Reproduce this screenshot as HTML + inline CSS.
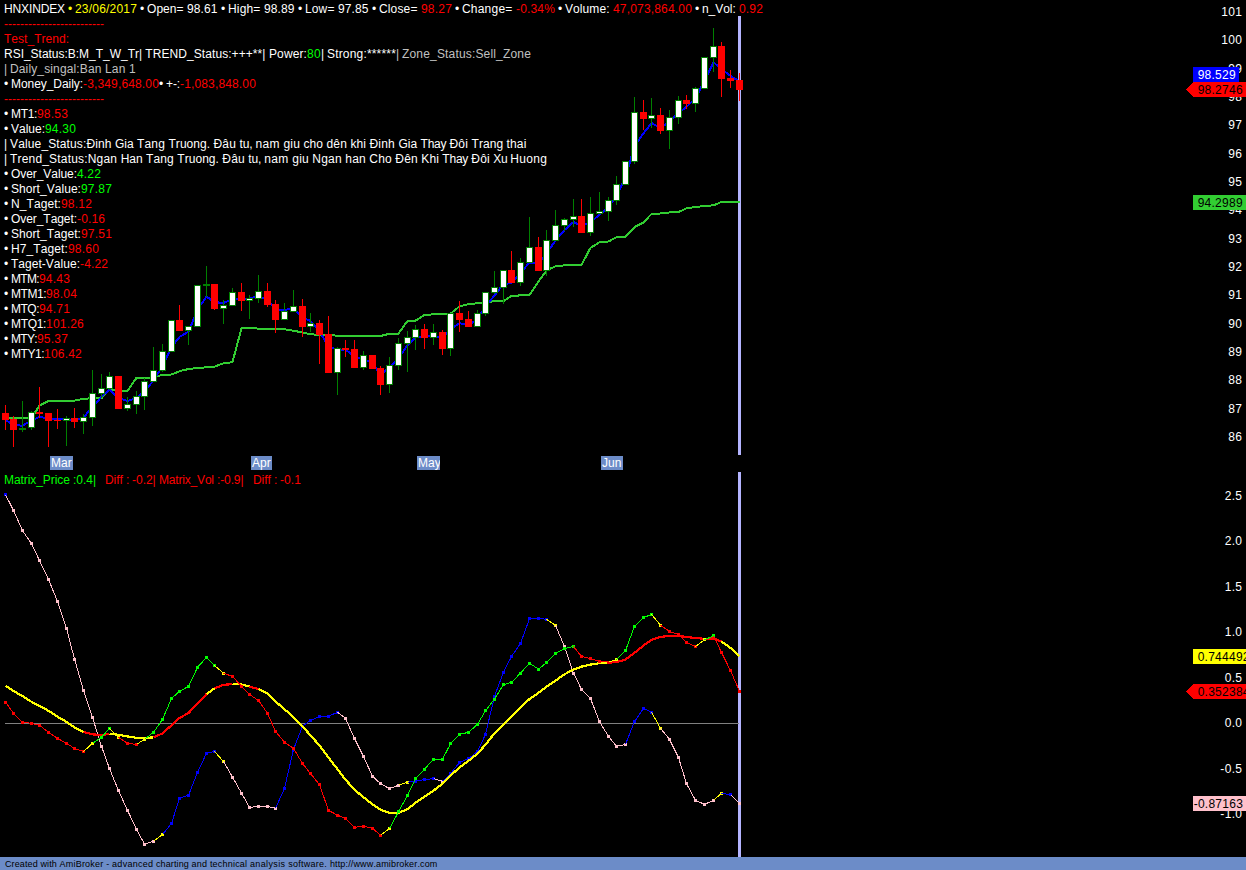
<!DOCTYPE html>
<html><head><meta charset="utf-8"><title>HNXINDEX</title>
<style>
html,body{margin:0;padding:0;background:#000;}
body{width:1246px;height:870px;overflow:hidden;position:relative;font-family:"Liberation Sans",Arial,sans-serif;font-size:12px;line-height:15px;color:#fff;}
.t{position:absolute;white-space:pre;height:15px;font-kerning:none}
.t span{position:absolute;top:0}
.r{color:#ff0000}.g{color:#00ff00}.y{color:#ffff00}.s{color:#c0c0c0}.w{color:#fff}
.ax{position:absolute;right:3.7px;letter-spacing:.33px;font-kerning:none;white-space:pre;height:15px;text-align:right;color:#fff}
.lb{position:absolute;letter-spacing:.25px;font-kerning:none;white-space:pre;height:15px;color:#000}
.m{position:absolute;top:456px;height:14px;line-height:14px;background:#6c8cc8;color:#fff;padding:0 0 0 1px;white-space:pre;font-kerning:none;overflow:hidden}
#sb{position:absolute;left:0;top:857px;width:1246px;height:13px;background:#6c8cc8;color:#000;font-size:9px;line-height:13px;white-space:pre}
#sb span{position:absolute;top:1px;font-kerning:none}
</style></head><body>

<svg width="1246" height="870" viewBox="0 0 1246 870" shape-rendering="crispEdges" style="position:absolute;left:0;top:0">
<rect x="738" y="16" width="3" height="439" fill="#b4b4ff"/>
<rect x="738" y="472" width="3" height="385" fill="#b4b4ff"/>
<polyline points="5.5,418.3 13.5,418.3 22.5,418.3 31.5,418.0 39.5,405.6 48.5,401.0 57.5,400.7 66.5,400.7 74.5,400.7 83.5,398.6 92.5,398.4 101.5,398.2 109.5,389.0 118.5,391.0 127.5,391.0 136.5,377.8 144.5,377.8 153.5,377.5 162.5,374.7 171.5,374.5 179.5,371.2 188.5,369.0 197.5,368.0 206.5,367.3 214.5,366.7 223.5,363.3 232.5,362.2 241.5,328.2 249.5,327.9 258.5,328.6 267.5,329.2 275.5,329.2 284.5,329.2 293.5,330.7 302.5,332.5 310.5,334.4 319.5,334.7 328.5,334.8 337.5,335.8 345.5,335.8 354.5,335.8 363.5,335.8 372.5,335.8 380.5,336.0 389.5,333.8 398.5,333.6 407.5,321.0 415.5,320.6 424.5,315.0 433.5,314.3 442.5,314.0 450.5,313.6 459.5,306.4 468.5,304.2 477.5,303.2 485.5,302.4 494.5,301.2 503.5,301.2 511.5,295.9 520.5,295.4 529.5,295.1 538.5,281.4 546.5,270.5 555.5,266.2 564.5,265.4 573.5,265.2 581.5,264.9 590.5,247.8 599.5,242.3 608.5,241.5 616.5,237.2 625.5,236.9 634.5,227.1 643.5,222.5 651.5,213.9 660.5,213.5 669.5,212.5 678.5,212.1 686.5,208.2 695.5,207.0 704.5,206.0 713.5,205.3 721.5,202.0 730.5,201.7 739.5,201.7" fill="none" stroke="#32cd32" stroke-width="2" stroke-linejoin="round"/>
<polyline points="5.5,419.8 13.5,425.3 22.5,425.6 31.5,420.5 39.5,416.9 48.5,418.6 57.5,419.0 66.5,419.4 74.5,419.8 83.5,417.6 92.5,406.8 101.5,396.9 109.5,389.4 118.5,398.0 127.5,401.0 136.5,398.0 144.5,390.8 153.5,380.7 162.5,366.0 171.5,347.3 179.5,336.9 188.5,331.8 197.5,309.4 206.5,296.6 214.5,302.1 223.5,303.0 232.5,299.0 241.5,299.2 249.5,298.5 258.5,296.0 267.5,300.0 275.5,309.5 284.5,309.8 293.5,308.7 302.5,317.3 310.5,321.0 319.5,331.1 328.5,347.0 337.5,349.6 345.5,349.5 354.5,356.8 363.5,358.9 372.5,363.3 380.5,374.5 389.5,367.5 398.5,358.2 407.5,345.2 415.5,337.2 424.5,336.9 433.5,335.8 442.5,337.9 450.5,329.0 459.5,323.2 468.5,325.3 477.5,319.1 485.5,306.0 494.5,295.6 503.5,284.0 511.5,283.1 520.5,272.7 529.5,262.5 538.5,263.0 546.5,253.5 555.5,240.5 564.5,230.0 573.5,222.0 581.5,226.3 590.5,222.0 599.5,214.8 608.5,207.5 616.5,195.9 625.5,177.5 634.5,146.2 643.5,133.3 651.5,123.1 660.5,127.9 669.5,121.4 678.5,112.7 686.5,106.9 695.5,98.2 704.5,80.8 713.5,62.3 721.5,69.2 730.5,75.8 739.5,81.5" fill="none" stroke="#0000ff" stroke-width="2" stroke-linejoin="round"/>
<rect x="5" y="405" width="1" height="25" fill="#ff0000"/>
<rect x="2" y="413" width="7" height="7" fill="#ff0000"/>
<rect x="13" y="416" width="1" height="31" fill="#ff0000"/>
<rect x="10" y="419" width="7" height="11" fill="#ff0000"/>
<rect x="22" y="401" width="1" height="31" fill="#008000"/>
<rect x="19" y="428" width="7" height="2" fill="#008000"/>
<rect x="31" y="411" width="1" height="19" fill="#008000"/>
<rect x="28" y="412" width="7" height="16" fill="#008000"/>
<rect x="29" y="413" width="5" height="14" fill="#ffffff"/>
<rect x="39" y="387" width="1" height="31" fill="#ff0000"/>
<rect x="36" y="412" width="7" height="2" fill="#ff0000"/>
<rect x="48" y="413" width="1" height="34" fill="#ff0000"/>
<rect x="45" y="413" width="7" height="8" fill="#ff0000"/>
<rect x="57" y="409" width="1" height="20" fill="#ff0000"/>
<rect x="54" y="420" width="7" height="1" fill="#ff0000"/>
<rect x="66" y="416" width="1" height="30" fill="#008000"/>
<rect x="63" y="418" width="7" height="3" fill="#008000"/>
<rect x="64" y="419" width="5" height="1" fill="#ffffff"/>
<rect x="74" y="408" width="1" height="20" fill="#ff0000"/>
<rect x="71" y="418" width="7" height="4" fill="#ff0000"/>
<rect x="83" y="414" width="1" height="20" fill="#008000"/>
<rect x="80" y="417" width="7" height="5" fill="#008000"/>
<rect x="81" y="418" width="5" height="3" fill="#ffffff"/>
<rect x="92" y="370" width="1" height="56" fill="#008000"/>
<rect x="89" y="393" width="7" height="25" fill="#008000"/>
<rect x="90" y="394" width="5" height="23" fill="#ffffff"/>
<rect x="101" y="374" width="1" height="24" fill="#008000"/>
<rect x="98" y="388" width="7" height="6" fill="#008000"/>
<rect x="99" y="389" width="5" height="4" fill="#ffffff"/>
<rect x="109" y="372" width="1" height="18" fill="#008000"/>
<rect x="106" y="376" width="7" height="13" fill="#008000"/>
<rect x="107" y="377" width="5" height="11" fill="#ffffff"/>
<rect x="118" y="376" width="1" height="33" fill="#ff0000"/>
<rect x="115" y="376" width="7" height="33" fill="#ff0000"/>
<rect x="127" y="397" width="1" height="14" fill="#008000"/>
<rect x="124" y="404" width="7" height="5" fill="#008000"/>
<rect x="125" y="405" width="5" height="3" fill="#ffffff"/>
<rect x="136" y="391" width="1" height="23" fill="#008000"/>
<rect x="133" y="396" width="7" height="9" fill="#008000"/>
<rect x="134" y="397" width="5" height="7" fill="#ffffff"/>
<rect x="144" y="378" width="1" height="32" fill="#008000"/>
<rect x="141" y="381" width="7" height="16" fill="#008000"/>
<rect x="142" y="382" width="5" height="14" fill="#ffffff"/>
<rect x="153" y="347" width="1" height="35" fill="#008000"/>
<rect x="150" y="370" width="7" height="12" fill="#008000"/>
<rect x="151" y="371" width="5" height="10" fill="#ffffff"/>
<rect x="162" y="344" width="1" height="28" fill="#008000"/>
<rect x="159" y="351" width="7" height="20" fill="#008000"/>
<rect x="160" y="352" width="5" height="18" fill="#ffffff"/>
<rect x="171" y="320" width="1" height="32" fill="#008000"/>
<rect x="168" y="320" width="7" height="32" fill="#008000"/>
<rect x="169" y="321" width="5" height="30" fill="#ffffff"/>
<rect x="179" y="305" width="1" height="26" fill="#ff0000"/>
<rect x="176" y="320" width="7" height="11" fill="#ff0000"/>
<rect x="188" y="326" width="1" height="19" fill="#008000"/>
<rect x="185" y="326" width="7" height="5" fill="#008000"/>
<rect x="186" y="327" width="5" height="3" fill="#ffffff"/>
<rect x="197" y="285" width="1" height="42" fill="#008000"/>
<rect x="194" y="285" width="7" height="42" fill="#008000"/>
<rect x="195" y="286" width="5" height="40" fill="#ffffff"/>
<rect x="206" y="266" width="1" height="31" fill="#008000"/>
<rect x="203" y="284" width="7" height="2" fill="#008000"/>
<rect x="214" y="284" width="1" height="26" fill="#ff0000"/>
<rect x="211" y="284" width="7" height="25" fill="#ff0000"/>
<rect x="223" y="300" width="1" height="24" fill="#008000"/>
<rect x="220" y="305" width="7" height="4" fill="#008000"/>
<rect x="221" y="306" width="5" height="2" fill="#ffffff"/>
<rect x="232" y="288" width="1" height="18" fill="#008000"/>
<rect x="229" y="292" width="7" height="14" fill="#008000"/>
<rect x="230" y="293" width="5" height="12" fill="#ffffff"/>
<rect x="241" y="283" width="1" height="28" fill="#ff0000"/>
<rect x="238" y="292" width="7" height="9" fill="#ff0000"/>
<rect x="249" y="295" width="1" height="24" fill="#008000"/>
<rect x="246" y="298" width="7" height="3" fill="#008000"/>
<rect x="247" y="299" width="5" height="1" fill="#ffffff"/>
<rect x="258" y="275" width="1" height="28" fill="#008000"/>
<rect x="255" y="291" width="7" height="8" fill="#008000"/>
<rect x="256" y="292" width="5" height="6" fill="#ffffff"/>
<rect x="267" y="283" width="1" height="24" fill="#ff0000"/>
<rect x="264" y="291" width="7" height="14" fill="#ff0000"/>
<rect x="275" y="300" width="1" height="33" fill="#ff0000"/>
<rect x="272" y="304" width="7" height="16" fill="#ff0000"/>
<rect x="284" y="303" width="1" height="17" fill="#008000"/>
<rect x="281" y="311" width="7" height="9" fill="#008000"/>
<rect x="282" y="312" width="5" height="7" fill="#ffffff"/>
<rect x="293" y="290" width="1" height="22" fill="#008000"/>
<rect x="290" y="306" width="7" height="6" fill="#008000"/>
<rect x="291" y="307" width="5" height="4" fill="#ffffff"/>
<rect x="302" y="299" width="1" height="38" fill="#ff0000"/>
<rect x="299" y="306" width="7" height="21" fill="#ff0000"/>
<rect x="310" y="313" width="1" height="19" fill="#008000"/>
<rect x="307" y="323" width="7" height="4" fill="#008000"/>
<rect x="308" y="324" width="5" height="2" fill="#ffffff"/>
<rect x="319" y="320" width="1" height="44" fill="#ff0000"/>
<rect x="316" y="323" width="7" height="12" fill="#ff0000"/>
<rect x="328" y="316" width="1" height="57" fill="#ff0000"/>
<rect x="325" y="334" width="7" height="39" fill="#ff0000"/>
<rect x="337" y="347" width="1" height="48" fill="#008000"/>
<rect x="334" y="348" width="7" height="25" fill="#008000"/>
<rect x="335" y="349" width="5" height="23" fill="#ffffff"/>
<rect x="345" y="340" width="1" height="17" fill="#ff0000"/>
<rect x="342" y="348" width="7" height="2" fill="#ff0000"/>
<rect x="354" y="340" width="1" height="28" fill="#ff0000"/>
<rect x="351" y="349" width="7" height="19" fill="#ff0000"/>
<rect x="363" y="351" width="1" height="19" fill="#008000"/>
<rect x="360" y="355" width="7" height="13" fill="#008000"/>
<rect x="361" y="356" width="5" height="11" fill="#ffffff"/>
<rect x="372" y="355" width="1" height="14" fill="#ff0000"/>
<rect x="369" y="355" width="7" height="14" fill="#ff0000"/>
<rect x="380" y="366" width="1" height="29" fill="#ff0000"/>
<rect x="377" y="368" width="7" height="17" fill="#ff0000"/>
<rect x="389" y="357" width="1" height="36" fill="#008000"/>
<rect x="386" y="365" width="7" height="20" fill="#008000"/>
<rect x="387" y="366" width="5" height="18" fill="#ffffff"/>
<rect x="398" y="338" width="1" height="32" fill="#008000"/>
<rect x="395" y="343" width="7" height="23" fill="#008000"/>
<rect x="396" y="344" width="5" height="21" fill="#ffffff"/>
<rect x="407" y="331" width="1" height="41" fill="#008000"/>
<rect x="404" y="337" width="7" height="7" fill="#008000"/>
<rect x="405" y="338" width="5" height="5" fill="#ffffff"/>
<rect x="415" y="325" width="1" height="25" fill="#008000"/>
<rect x="412" y="329" width="7" height="9" fill="#008000"/>
<rect x="413" y="330" width="5" height="7" fill="#ffffff"/>
<rect x="424" y="324" width="1" height="25" fill="#ff0000"/>
<rect x="421" y="329" width="7" height="9" fill="#ff0000"/>
<rect x="433" y="324" width="1" height="21" fill="#008000"/>
<rect x="430" y="332" width="7" height="6" fill="#008000"/>
<rect x="431" y="333" width="5" height="4" fill="#ffffff"/>
<rect x="442" y="330" width="1" height="25" fill="#ff0000"/>
<rect x="439" y="332" width="7" height="17" fill="#ff0000"/>
<rect x="450" y="313" width="1" height="43" fill="#008000"/>
<rect x="447" y="313" width="7" height="36" fill="#008000"/>
<rect x="448" y="314" width="5" height="34" fill="#ffffff"/>
<rect x="459" y="301" width="1" height="31" fill="#ff0000"/>
<rect x="456" y="313" width="7" height="7" fill="#ff0000"/>
<rect x="468" y="311" width="1" height="16" fill="#ff0000"/>
<rect x="465" y="319" width="7" height="8" fill="#ff0000"/>
<rect x="477" y="310" width="1" height="17" fill="#008000"/>
<rect x="474" y="313" width="7" height="14" fill="#008000"/>
<rect x="475" y="314" width="5" height="12" fill="#ffffff"/>
<rect x="485" y="292" width="1" height="24" fill="#008000"/>
<rect x="482" y="292" width="7" height="22" fill="#008000"/>
<rect x="483" y="293" width="5" height="20" fill="#ffffff"/>
<rect x="494" y="271" width="1" height="23" fill="#008000"/>
<rect x="491" y="287" width="7" height="6" fill="#008000"/>
<rect x="492" y="288" width="5" height="4" fill="#ffffff"/>
<rect x="503" y="270" width="1" height="34" fill="#008000"/>
<rect x="500" y="270" width="7" height="18" fill="#008000"/>
<rect x="501" y="271" width="5" height="16" fill="#ffffff"/>
<rect x="511" y="251" width="1" height="32" fill="#ff0000"/>
<rect x="508" y="270" width="7" height="13" fill="#ff0000"/>
<rect x="520" y="258" width="1" height="28" fill="#008000"/>
<rect x="517" y="262" width="7" height="21" fill="#008000"/>
<rect x="518" y="263" width="5" height="19" fill="#ffffff"/>
<rect x="529" y="217" width="1" height="46" fill="#008000"/>
<rect x="526" y="247" width="7" height="16" fill="#008000"/>
<rect x="527" y="248" width="5" height="14" fill="#ffffff"/>
<rect x="538" y="237" width="1" height="34" fill="#ff0000"/>
<rect x="535" y="247" width="7" height="24" fill="#ff0000"/>
<rect x="546" y="230" width="1" height="46" fill="#008000"/>
<rect x="543" y="240" width="7" height="31" fill="#008000"/>
<rect x="544" y="241" width="5" height="29" fill="#ffffff"/>
<rect x="555" y="210" width="1" height="31" fill="#008000"/>
<rect x="552" y="225" width="7" height="16" fill="#008000"/>
<rect x="553" y="226" width="5" height="14" fill="#ffffff"/>
<rect x="564" y="218" width="1" height="13" fill="#008000"/>
<rect x="561" y="219" width="7" height="7" fill="#008000"/>
<rect x="562" y="220" width="5" height="5" fill="#ffffff"/>
<rect x="573" y="199" width="1" height="28" fill="#008000"/>
<rect x="570" y="216" width="7" height="4" fill="#008000"/>
<rect x="571" y="217" width="5" height="2" fill="#ffffff"/>
<rect x="581" y="199" width="1" height="34" fill="#ff0000"/>
<rect x="578" y="216" width="7" height="17" fill="#ff0000"/>
<rect x="590" y="197" width="1" height="39" fill="#008000"/>
<rect x="587" y="213" width="7" height="20" fill="#008000"/>
<rect x="588" y="214" width="5" height="18" fill="#ffffff"/>
<rect x="599" y="192" width="1" height="22" fill="#008000"/>
<rect x="596" y="211" width="7" height="3" fill="#008000"/>
<rect x="597" y="212" width="5" height="1" fill="#ffffff"/>
<rect x="608" y="197" width="1" height="24" fill="#008000"/>
<rect x="605" y="200" width="7" height="12" fill="#008000"/>
<rect x="606" y="201" width="5" height="10" fill="#ffffff"/>
<rect x="616" y="176" width="1" height="29" fill="#008000"/>
<rect x="613" y="184" width="7" height="17" fill="#008000"/>
<rect x="614" y="185" width="5" height="15" fill="#ffffff"/>
<rect x="625" y="161" width="1" height="24" fill="#008000"/>
<rect x="622" y="161" width="7" height="24" fill="#008000"/>
<rect x="623" y="162" width="5" height="22" fill="#ffffff"/>
<rect x="634" y="97" width="1" height="67" fill="#008000"/>
<rect x="631" y="112" width="7" height="50" fill="#008000"/>
<rect x="632" y="113" width="5" height="48" fill="#ffffff"/>
<rect x="643" y="100" width="1" height="30" fill="#ff0000"/>
<rect x="640" y="112" width="7" height="7" fill="#ff0000"/>
<rect x="651" y="98" width="1" height="30" fill="#008000"/>
<rect x="648" y="115" width="7" height="4" fill="#008000"/>
<rect x="649" y="116" width="5" height="2" fill="#ffffff"/>
<rect x="660" y="108" width="1" height="26" fill="#ff0000"/>
<rect x="657" y="115" width="7" height="16" fill="#ff0000"/>
<rect x="669" y="110" width="1" height="39" fill="#008000"/>
<rect x="666" y="117" width="7" height="14" fill="#008000"/>
<rect x="667" y="118" width="5" height="12" fill="#ffffff"/>
<rect x="678" y="96" width="1" height="28" fill="#008000"/>
<rect x="675" y="100" width="7" height="18" fill="#008000"/>
<rect x="676" y="101" width="5" height="16" fill="#ffffff"/>
<rect x="686" y="95" width="1" height="14" fill="#ff0000"/>
<rect x="683" y="100" width="7" height="4" fill="#ff0000"/>
<rect x="695" y="87" width="1" height="25" fill="#008000"/>
<rect x="692" y="88" width="7" height="16" fill="#008000"/>
<rect x="693" y="89" width="5" height="14" fill="#ffffff"/>
<rect x="704" y="57" width="1" height="32" fill="#008000"/>
<rect x="701" y="57" width="7" height="32" fill="#008000"/>
<rect x="702" y="58" width="5" height="30" fill="#ffffff"/>
<rect x="713" y="28" width="1" height="44" fill="#008000"/>
<rect x="710" y="46" width="7" height="12" fill="#008000"/>
<rect x="711" y="47" width="5" height="10" fill="#ffffff"/>
<rect x="721" y="42" width="1" height="55" fill="#ff0000"/>
<rect x="718" y="46" width="7" height="33" fill="#ff0000"/>
<rect x="730" y="70" width="1" height="18" fill="#ff0000"/>
<rect x="727" y="78" width="7" height="3" fill="#ff0000"/>
<rect x="739" y="73" width="1" height="28" fill="#ff0000"/>
<rect x="736" y="80" width="7" height="10" fill="#ff0000"/>
<rect x="5" y="723" width="734" height="1" fill="#808080"/>
<rect x="4" y="493" width="3" height="3" fill="#0000ff"/>
<rect x="12" y="509" width="3" height="3" fill="#ffc0cb"/>
<rect x="21" y="529" width="3" height="3" fill="#ffc0cb"/>
<rect x="30" y="542" width="3" height="3" fill="#ffc0cb"/>
<rect x="38" y="559" width="3" height="3" fill="#ffc0cb"/>
<rect x="47" y="578" width="3" height="3" fill="#ffc0cb"/>
<rect x="56" y="600" width="3" height="3" fill="#ffc0cb"/>
<rect x="65" y="627" width="3" height="3" fill="#ffc0cb"/>
<rect x="73" y="658" width="3" height="3" fill="#ffc0cb"/>
<rect x="82" y="689" width="3" height="3" fill="#ffc0cb"/>
<rect x="91" y="716" width="3" height="3" fill="#ffc0cb"/>
<rect x="100" y="745" width="3" height="3" fill="#ffc0cb"/>
<rect x="108" y="767" width="3" height="3" fill="#ffc0cb"/>
<rect x="117" y="789" width="3" height="3" fill="#ffc0cb"/>
<rect x="126" y="809" width="3" height="3" fill="#ffc0cb"/>
<rect x="135" y="828" width="3" height="3" fill="#ffc0cb"/>
<rect x="143" y="843" width="3" height="3" fill="#ffc0cb"/>
<rect x="152" y="840" width="3" height="3" fill="#ffc0cb"/>
<rect x="161" y="833" width="3" height="3" fill="#ffff00"/>
<rect x="170" y="822" width="3" height="3" fill="#0000ff"/>
<rect x="178" y="797" width="3" height="3" fill="#0000ff"/>
<rect x="187" y="794" width="3" height="3" fill="#0000ff"/>
<rect x="196" y="771" width="3" height="3" fill="#0000ff"/>
<rect x="205" y="752" width="3" height="3" fill="#0000ff"/>
<rect x="213" y="750" width="3" height="3" fill="#0000ff"/>
<rect x="222" y="760" width="3" height="3" fill="#ffff00"/>
<rect x="231" y="776" width="3" height="3" fill="#ffc0cb"/>
<rect x="240" y="792" width="3" height="3" fill="#ffc0cb"/>
<rect x="248" y="806" width="3" height="3" fill="#ffc0cb"/>
<rect x="257" y="805" width="3" height="3" fill="#ffc0cb"/>
<rect x="266" y="805" width="3" height="3" fill="#ffc0cb"/>
<rect x="274" y="807" width="3" height="3" fill="#ffc0cb"/>
<rect x="283" y="787" width="3" height="3" fill="#0000ff"/>
<rect x="292" y="748" width="3" height="3" fill="#0000ff"/>
<rect x="301" y="725" width="3" height="3" fill="#0000ff"/>
<rect x="309" y="719" width="3" height="3" fill="#0000ff"/>
<rect x="318" y="715" width="3" height="3" fill="#0000ff"/>
<rect x="327" y="715" width="3" height="3" fill="#0000ff"/>
<rect x="336" y="711" width="3" height="3" fill="#0000ff"/>
<rect x="344" y="717" width="3" height="3" fill="#ffc0cb"/>
<rect x="353" y="737" width="3" height="3" fill="#ffc0cb"/>
<rect x="362" y="755" width="3" height="3" fill="#ffc0cb"/>
<rect x="371" y="775" width="3" height="3" fill="#ffc0cb"/>
<rect x="379" y="782" width="3" height="3" fill="#ffc0cb"/>
<rect x="388" y="787" width="3" height="3" fill="#ffc0cb"/>
<rect x="397" y="784" width="3" height="3" fill="#ffc0cb"/>
<rect x="406" y="781" width="3" height="3" fill="#ffff00"/>
<rect x="414" y="780" width="3" height="3" fill="#0000ff"/>
<rect x="423" y="778" width="3" height="3" fill="#0000ff"/>
<rect x="432" y="777" width="3" height="3" fill="#0000ff"/>
<rect x="441" y="780" width="3" height="3" fill="#ffc0cb"/>
<rect x="449" y="772" width="3" height="3" fill="#0000ff"/>
<rect x="458" y="761" width="3" height="3" fill="#0000ff"/>
<rect x="467" y="757" width="3" height="3" fill="#0000ff"/>
<rect x="476" y="750" width="3" height="3" fill="#0000ff"/>
<rect x="484" y="733" width="3" height="3" fill="#0000ff"/>
<rect x="493" y="695" width="3" height="3" fill="#0000ff"/>
<rect x="502" y="671" width="3" height="3" fill="#0000ff"/>
<rect x="510" y="655" width="3" height="3" fill="#0000ff"/>
<rect x="519" y="642" width="3" height="3" fill="#0000ff"/>
<rect x="528" y="617" width="3" height="3" fill="#0000ff"/>
<rect x="537" y="617" width="3" height="3" fill="#0000ff"/>
<rect x="545" y="618" width="3" height="3" fill="#0000ff"/>
<rect x="554" y="624" width="3" height="3" fill="#ffff00"/>
<rect x="563" y="645" width="3" height="3" fill="#ffc0cb"/>
<rect x="572" y="672" width="3" height="3" fill="#ffc0cb"/>
<rect x="580" y="688" width="3" height="3" fill="#ffc0cb"/>
<rect x="589" y="697" width="3" height="3" fill="#ffc0cb"/>
<rect x="598" y="720" width="3" height="3" fill="#ffc0cb"/>
<rect x="607" y="735" width="3" height="3" fill="#ffc0cb"/>
<rect x="615" y="745" width="3" height="3" fill="#ffc0cb"/>
<rect x="624" y="743" width="3" height="3" fill="#ffc0cb"/>
<rect x="633" y="720" width="3" height="3" fill="#0000ff"/>
<rect x="642" y="707" width="3" height="3" fill="#0000ff"/>
<rect x="650" y="711" width="3" height="3" fill="#0000ff"/>
<rect x="659" y="727" width="3" height="3" fill="#ffff00"/>
<rect x="668" y="738" width="3" height="3" fill="#ffc0cb"/>
<rect x="677" y="756" width="3" height="3" fill="#ffc0cb"/>
<rect x="685" y="782" width="3" height="3" fill="#ffc0cb"/>
<rect x="694" y="799" width="3" height="3" fill="#ffc0cb"/>
<rect x="703" y="803" width="3" height="3" fill="#ffc0cb"/>
<rect x="712" y="799" width="3" height="3" fill="#ffc0cb"/>
<rect x="720" y="792" width="3" height="3" fill="#ffff00"/>
<rect x="729" y="793" width="3" height="3" fill="#0000ff"/>
<rect x="738" y="802" width="3" height="3" fill="#ffc0cb"/>
<polyline points="5.5,494.7 13.5,510.4 22.5,530.7 31.5,543.6 39.5,560.6 48.5,579.4 57.5,601.4 66.5,628.4 74.5,659.1 83.5,690.3 92.5,717.3 101.5,746.4 109.5,768.6 118.5,790.7 127.5,810.2 136.5,829.5 144.5,844.0 153.5,841.4" fill="none" stroke="#ffc0cb" stroke-width="1" stroke-linejoin="round" stroke-linecap="butt"/>
<polyline points="153.5,841.4 162.5,834.5" fill="none" stroke="#ffff00" stroke-width="1" stroke-linejoin="round" stroke-linecap="butt"/>
<polyline points="162.5,834.5 171.5,823.5 179.5,798.1 188.5,795.3 197.5,772.6 206.5,753.1 214.5,751.5" fill="none" stroke="#0000ff" stroke-width="1" stroke-linejoin="round" stroke-linecap="butt"/>
<polyline points="214.5,751.5 223.5,761.5" fill="none" stroke="#ffff00" stroke-width="1" stroke-linejoin="round" stroke-linecap="butt"/>
<polyline points="223.5,761.5 232.5,777.2 241.5,793.0 249.5,807.4 258.5,806.4 267.5,806.4 275.5,808.4" fill="none" stroke="#ffc0cb" stroke-width="1" stroke-linejoin="round" stroke-linecap="butt"/>
<polyline points="275.5,808.4 284.5,788.3 293.5,749.4 302.5,726.3 310.5,720.3 319.5,716.7 328.5,716.3 337.5,712.2" fill="none" stroke="#0000ff" stroke-width="1" stroke-linejoin="round" stroke-linecap="butt"/>
<polyline points="337.5,712.2 345.5,718.3 354.5,738.4 363.5,756.5 372.5,776.2 380.5,783.6 389.5,788.7 398.5,785.2" fill="none" stroke="#ffc0cb" stroke-width="1" stroke-linejoin="round" stroke-linecap="butt"/>
<polyline points="398.5,785.2 407.5,782.2" fill="none" stroke="#ffff00" stroke-width="1" stroke-linejoin="round" stroke-linecap="butt"/>
<polyline points="407.5,782.2 415.5,781.2 424.5,779.6 433.5,778.6" fill="none" stroke="#0000ff" stroke-width="1" stroke-linejoin="round" stroke-linecap="butt"/>
<polyline points="433.5,778.6 442.5,781.2" fill="none" stroke="#ffc0cb" stroke-width="1" stroke-linejoin="round" stroke-linecap="butt"/>
<polyline points="442.5,781.2 450.5,773.6 459.5,762.5 468.5,758.5 477.5,751.5 485.5,734.4 494.5,696.4 503.5,672.1 511.5,656.5 520.5,643.5 529.5,618.7 538.5,618.3 546.5,619.3" fill="none" stroke="#0000ff" stroke-width="1" stroke-linejoin="round" stroke-linecap="butt"/>
<polyline points="546.5,619.3 555.5,625.4" fill="none" stroke="#ffff00" stroke-width="1" stroke-linejoin="round" stroke-linecap="butt"/>
<polyline points="555.5,625.4 564.5,646.5 573.5,673.3 581.5,689.4 590.5,698.6 599.5,721.6 608.5,736.4 616.5,746.4 625.5,744.4" fill="none" stroke="#ffc0cb" stroke-width="1" stroke-linejoin="round" stroke-linecap="butt"/>
<polyline points="625.5,744.4 634.5,721.6 643.5,708.3 651.5,712.2" fill="none" stroke="#0000ff" stroke-width="1" stroke-linejoin="round" stroke-linecap="butt"/>
<polyline points="651.5,712.2 660.5,728.3" fill="none" stroke="#ffff00" stroke-width="1" stroke-linejoin="round" stroke-linecap="butt"/>
<polyline points="660.5,728.3 669.5,739.4 678.5,757.5 686.5,783.6 695.5,800.3 704.5,804.4 713.5,800.3" fill="none" stroke="#ffc0cb" stroke-width="1" stroke-linejoin="round" stroke-linecap="butt"/>
<polyline points="713.5,800.3 721.5,793.3" fill="none" stroke="#ffff00" stroke-width="1" stroke-linejoin="round" stroke-linecap="butt"/>
<polyline points="721.5,793.3 730.5,794.7" fill="none" stroke="#0000ff" stroke-width="1" stroke-linejoin="round" stroke-linecap="butt"/>
<polyline points="730.5,794.7 739.5,803.4" fill="none" stroke="#ffc0cb" stroke-width="1" stroke-linejoin="round" stroke-linecap="butt"/>
<polyline points="5.5,685.7 13.5,691.1 22.5,696.1 31.5,701.8 39.5,705.8 48.5,710.8 57.5,716.7 66.5,721.9 74.5,727.3 83.5,731.9" fill="none" stroke="#ffff00" stroke-width="2.2" stroke-linejoin="round" stroke-linecap="butt"/>
<polyline points="83.5,731.9 92.5,734.4 101.5,735.0 109.5,733.8" fill="none" stroke="#ff0000" stroke-width="2.2" stroke-linejoin="round" stroke-linecap="butt"/>
<polyline points="109.5,733.8 118.5,734.8 127.5,736.4 136.5,737.8 144.5,738.0 153.5,737.4" fill="none" stroke="#ffff00" stroke-width="2.2" stroke-linejoin="round" stroke-linecap="butt"/>
<polyline points="153.5,737.4 162.5,733.4 171.5,725.3 179.5,718.0 188.5,713.0 197.5,703.8 206.5,694.0" fill="none" stroke="#ff0000" stroke-width="2.2" stroke-linejoin="round" stroke-linecap="butt"/>
<polyline points="206.5,694.0 214.5,688.4" fill="none" stroke="#ffff00" stroke-width="2.2" stroke-linejoin="round" stroke-linecap="butt"/>
<polyline points="214.5,688.4 223.5,684.9 232.5,684.0" fill="none" stroke="#ff0000" stroke-width="2.2" stroke-linejoin="round" stroke-linecap="butt"/>
<polyline points="232.5,684.0 241.5,684.5 249.5,686.5" fill="none" stroke="#ffff00" stroke-width="2.2" stroke-linejoin="round" stroke-linecap="butt"/>
<polyline points="249.5,686.5 258.5,689.2" fill="none" stroke="#ff0000" stroke-width="2.2" stroke-linejoin="round" stroke-linecap="butt"/>
<polyline points="258.5,689.2 267.5,693.2 275.5,701.5 284.5,709.2 293.5,717.3 302.5,726.3 310.5,735.4 319.5,745.4 328.5,757.5 337.5,769.2 345.5,779.6 354.5,789.7 363.5,797.3 372.5,804.4 380.5,809.8 389.5,812.8 398.5,812.8 407.5,809.2 415.5,802.7 424.5,796.7 433.5,790.7 442.5,783.6 450.5,775.6 459.5,767.5 468.5,760.9 477.5,753.5 485.5,744.7 494.5,733.2 503.5,724.6 511.5,716.1 520.5,707.5 529.5,699.0 538.5,692.9 546.5,686.6 555.5,680.7 564.5,674.3 573.5,669.6 581.5,666.6 590.5,664.6 599.5,663.2 608.5,662.6" fill="none" stroke="#ffff00" stroke-width="2.2" stroke-linejoin="round" stroke-linecap="butt"/>
<polyline points="608.5,662.6 616.5,662.2 625.5,659.6 634.5,652.9 643.5,645.5 651.5,639.8 660.5,637.0 669.5,635.8 678.5,635.8 686.5,637.0 695.5,638.0 704.5,638.8 713.5,638.4 721.5,641.5" fill="none" stroke="#ff0000" stroke-width="2.2" stroke-linejoin="round" stroke-linecap="butt"/>
<polyline points="721.5,641.5 730.5,647.9 739.5,656.1" fill="none" stroke="#ffff00" stroke-width="2.2" stroke-linejoin="round" stroke-linecap="butt"/>
<rect x="4" y="701" width="3" height="3" fill="#ff0000"/>
<rect x="12" y="712" width="3" height="3" fill="#ff0000"/>
<rect x="21" y="721" width="3" height="3" fill="#ff0000"/>
<rect x="30" y="722" width="3" height="3" fill="#ff0000"/>
<rect x="38" y="724" width="3" height="3" fill="#ff0000"/>
<rect x="47" y="731" width="3" height="3" fill="#ff0000"/>
<rect x="56" y="737" width="3" height="3" fill="#ff0000"/>
<rect x="65" y="742" width="3" height="3" fill="#ff0000"/>
<rect x="73" y="747" width="3" height="3" fill="#ff0000"/>
<rect x="82" y="750" width="3" height="3" fill="#ff0000"/>
<rect x="91" y="742" width="3" height="3" fill="#ffff00"/>
<rect x="100" y="736" width="3" height="3" fill="#00ff00"/>
<rect x="108" y="727" width="3" height="3" fill="#00ff00"/>
<rect x="117" y="736" width="3" height="3" fill="#ffff00"/>
<rect x="126" y="742" width="3" height="3" fill="#ff0000"/>
<rect x="135" y="743" width="3" height="3" fill="#ff0000"/>
<rect x="143" y="738" width="3" height="3" fill="#ffff00"/>
<rect x="152" y="731" width="3" height="3" fill="#00ff00"/>
<rect x="161" y="718" width="3" height="3" fill="#00ff00"/>
<rect x="170" y="697" width="3" height="3" fill="#00ff00"/>
<rect x="178" y="690" width="3" height="3" fill="#00ff00"/>
<rect x="187" y="685" width="3" height="3" fill="#00ff00"/>
<rect x="196" y="666" width="3" height="3" fill="#00ff00"/>
<rect x="205" y="656" width="3" height="3" fill="#00ff00"/>
<rect x="213" y="664" width="3" height="3" fill="#00ff00"/>
<rect x="222" y="672" width="3" height="3" fill="#ffff00"/>
<rect x="231" y="675" width="3" height="3" fill="#ff0000"/>
<rect x="240" y="685" width="3" height="3" fill="#ff0000"/>
<rect x="248" y="693" width="3" height="3" fill="#ff0000"/>
<rect x="257" y="699" width="3" height="3" fill="#ff0000"/>
<rect x="266" y="712" width="3" height="3" fill="#ff0000"/>
<rect x="274" y="730" width="3" height="3" fill="#ff0000"/>
<rect x="283" y="741" width="3" height="3" fill="#ff0000"/>
<rect x="292" y="747" width="3" height="3" fill="#ff0000"/>
<rect x="301" y="762" width="3" height="3" fill="#ff0000"/>
<rect x="309" y="772" width="3" height="3" fill="#ff0000"/>
<rect x="318" y="783" width="3" height="3" fill="#ff0000"/>
<rect x="327" y="809" width="3" height="3" fill="#ff0000"/>
<rect x="336" y="814" width="3" height="3" fill="#ff0000"/>
<rect x="344" y="817" width="3" height="3" fill="#ff0000"/>
<rect x="353" y="826" width="3" height="3" fill="#ff0000"/>
<rect x="362" y="825" width="3" height="3" fill="#ff0000"/>
<rect x="371" y="827" width="3" height="3" fill="#ff0000"/>
<rect x="379" y="834" width="3" height="3" fill="#ff0000"/>
<rect x="388" y="827" width="3" height="3" fill="#ffff00"/>
<rect x="397" y="810" width="3" height="3" fill="#00ff00"/>
<rect x="406" y="794" width="3" height="3" fill="#00ff00"/>
<rect x="414" y="777" width="3" height="3" fill="#00ff00"/>
<rect x="423" y="768" width="3" height="3" fill="#00ff00"/>
<rect x="432" y="758" width="3" height="3" fill="#00ff00"/>
<rect x="441" y="758" width="3" height="3" fill="#00ff00"/>
<rect x="449" y="742" width="3" height="3" fill="#00ff00"/>
<rect x="458" y="733" width="3" height="3" fill="#00ff00"/>
<rect x="467" y="731" width="3" height="3" fill="#00ff00"/>
<rect x="476" y="723" width="3" height="3" fill="#00ff00"/>
<rect x="484" y="709" width="3" height="3" fill="#00ff00"/>
<rect x="493" y="698" width="3" height="3" fill="#00ff00"/>
<rect x="502" y="683" width="3" height="3" fill="#00ff00"/>
<rect x="510" y="681" width="3" height="3" fill="#00ff00"/>
<rect x="519" y="672" width="3" height="3" fill="#00ff00"/>
<rect x="528" y="662" width="3" height="3" fill="#00ff00"/>
<rect x="537" y="668" width="3" height="3" fill="#00ff00"/>
<rect x="545" y="661" width="3" height="3" fill="#00ff00"/>
<rect x="554" y="652" width="3" height="3" fill="#00ff00"/>
<rect x="563" y="647" width="3" height="3" fill="#00ff00"/>
<rect x="572" y="645" width="3" height="3" fill="#00ff00"/>
<rect x="580" y="655" width="3" height="3" fill="#ff0000"/>
<rect x="589" y="657" width="3" height="3" fill="#ff0000"/>
<rect x="598" y="660" width="3" height="3" fill="#ff0000"/>
<rect x="607" y="661" width="3" height="3" fill="#ff0000"/>
<rect x="615" y="658" width="3" height="3" fill="#ffff00"/>
<rect x="624" y="649" width="3" height="3" fill="#00ff00"/>
<rect x="633" y="625" width="3" height="3" fill="#00ff00"/>
<rect x="642" y="616" width="3" height="3" fill="#00ff00"/>
<rect x="650" y="613" width="3" height="3" fill="#00ff00"/>
<rect x="659" y="624" width="3" height="3" fill="#ffff00"/>
<rect x="668" y="630" width="3" height="3" fill="#ff0000"/>
<rect x="677" y="633" width="3" height="3" fill="#ff0000"/>
<rect x="685" y="641" width="3" height="3" fill="#ff0000"/>
<rect x="694" y="645" width="3" height="3" fill="#ff0000"/>
<rect x="703" y="638" width="3" height="3" fill="#ffff00"/>
<rect x="712" y="634" width="3" height="3" fill="#00ff00"/>
<rect x="720" y="651" width="3" height="3" fill="#ff0000"/>
<rect x="729" y="669" width="3" height="3" fill="#ff0000"/>
<rect x="738" y="690" width="3" height="3" fill="#ff0000"/>
<polyline points="5.5,702.2 13.5,713.2 22.5,722.3 31.5,723.3 39.5,725.3 48.5,732.3 57.5,738.4 66.5,743.4 74.5,748.4 83.5,751.5" fill="none" stroke="#ff0000" stroke-width="1" stroke-linejoin="round" stroke-linecap="butt"/>
<polyline points="83.5,751.5 92.5,743.4" fill="none" stroke="#ffff00" stroke-width="1" stroke-linejoin="round" stroke-linecap="butt"/>
<polyline points="92.5,743.4 101.5,737.4 109.5,728.3" fill="none" stroke="#00ff00" stroke-width="1" stroke-linejoin="round" stroke-linecap="butt"/>
<polyline points="109.5,728.3 118.5,737.4" fill="none" stroke="#ffff00" stroke-width="1" stroke-linejoin="round" stroke-linecap="butt"/>
<polyline points="118.5,737.4 127.5,743.4 136.5,744.4" fill="none" stroke="#ff0000" stroke-width="1" stroke-linejoin="round" stroke-linecap="butt"/>
<polyline points="136.5,744.4 144.5,739.4" fill="none" stroke="#ffff00" stroke-width="1" stroke-linejoin="round" stroke-linecap="butt"/>
<polyline points="144.5,739.4 153.5,732.3 162.5,719.4 171.5,698.6 179.5,691.2 188.5,686.5 197.5,667.3 206.5,657.5 214.5,665.5" fill="none" stroke="#00ff00" stroke-width="1" stroke-linejoin="round" stroke-linecap="butt"/>
<polyline points="214.5,665.5 223.5,673.2" fill="none" stroke="#ffff00" stroke-width="1" stroke-linejoin="round" stroke-linecap="butt"/>
<polyline points="223.5,673.2 232.5,676.4 241.5,686.3 249.5,694.4 258.5,700.5 267.5,713.3 275.5,731.3 284.5,742.4 293.5,748.4 302.5,763.5 310.5,773.6 319.5,784.6 328.5,810.4 337.5,815.2 345.5,818.4 354.5,827.3 363.5,826.3 372.5,828.3 380.5,835.3" fill="none" stroke="#ff0000" stroke-width="1" stroke-linejoin="round" stroke-linecap="butt"/>
<polyline points="380.5,835.3 389.5,828.5" fill="none" stroke="#ffff00" stroke-width="1" stroke-linejoin="round" stroke-linecap="butt"/>
<polyline points="389.5,828.5 398.5,811.8 407.5,795.3 415.5,778.6 424.5,769.2 433.5,759.1 442.5,759.1 450.5,743.8 459.5,734.4 468.5,732.3 477.5,724.3 485.5,710.8 494.5,699.0 503.5,684.6 511.5,682.4 520.5,673.1 529.5,663.2 538.5,669.2 546.5,662.6 555.5,653.5 564.5,648.5 573.5,646.5" fill="none" stroke="#00ff00" stroke-width="1" stroke-linejoin="round" stroke-linecap="butt"/>
<polyline points="573.5,646.5 581.5,656.5 590.5,658.6 599.5,661.2 608.5,662.2" fill="none" stroke="#ff0000" stroke-width="1" stroke-linejoin="round" stroke-linecap="butt"/>
<polyline points="608.5,662.2 616.5,659.6" fill="none" stroke="#ffff00" stroke-width="1" stroke-linejoin="round" stroke-linecap="butt"/>
<polyline points="616.5,659.6 625.5,650.5 634.5,626.4 643.5,617.7 651.5,614.3" fill="none" stroke="#00ff00" stroke-width="1" stroke-linejoin="round" stroke-linecap="butt"/>
<polyline points="651.5,614.3 660.5,625.4" fill="none" stroke="#ffff00" stroke-width="1" stroke-linejoin="round" stroke-linecap="butt"/>
<polyline points="660.5,625.4 669.5,631.4 678.5,634.4 686.5,642.5 695.5,646.5" fill="none" stroke="#ff0000" stroke-width="1" stroke-linejoin="round" stroke-linecap="butt"/>
<polyline points="695.5,646.5 704.5,639.8" fill="none" stroke="#ffff00" stroke-width="1" stroke-linejoin="round" stroke-linecap="butt"/>
<polyline points="704.5,639.8 713.5,635.8" fill="none" stroke="#00ff00" stroke-width="1" stroke-linejoin="round" stroke-linecap="butt"/>
<polyline points="713.5,635.8 721.5,652.5 730.5,670.6 739.5,691.3" fill="none" stroke="#ff0000" stroke-width="1" stroke-linejoin="round" stroke-linecap="butt"/>
<rect x="1193" y="67" width="46" height="15" fill="#0000ff"/>
<polygon points="1186,89.5 1193,82 1246,82 1246,97 1193,97" fill="#ff0000"/>
<rect x="1193" y="195" width="53" height="15" fill="#32cd32"/>
<rect x="1193" y="649" width="53" height="15" fill="#ffff00"/>
<polygon points="1186,691.5 1193,684 1246,684 1246,699 1193,699" fill="#ff0000"/>
<rect x="1193" y="796" width="53" height="15" fill="#ffc0cb"/>
</svg>
<div class="t" id="r0" style="left:4px;top:2px"><span class="w" style="left:0.0px;letter-spacing:-0.126px">HNXINDEX</span><span class="y" style="left:61.0px;letter-spacing:-0.334px"> </span><span class="y" style="left:64.0px;letter-spacing:-0.268px">• </span><span class="y" style="left:71.0px;letter-spacing:0.194px">23/06/2017</span><span class="w" style="left:133.0px;letter-spacing:-0.334px"> </span><span class="w" style="left:136.0px;letter-spacing:-0.268px">• </span><span class="w" style="left:143.0px;letter-spacing:0.050px">Open= </span><span class="w" style="left:183.0px;letter-spacing:0.106px">98.61 </span><span class="w" style="left:217.0px;letter-spacing:-0.268px">• </span><span class="w" style="left:224.0px;letter-spacing:0.163px">High= </span><span class="w" style="left:260.0px;letter-spacing:0.106px">98.89 </span><span class="w" style="left:294.0px;letter-spacing:-0.268px">• </span><span class="w" style="left:301.0px;letter-spacing:0.129px">Low= </span><span class="w" style="left:334.0px;letter-spacing:0.106px">97.85 </span><span class="w" style="left:368.0px;letter-spacing:-0.268px">• </span><span class="w" style="left:375.0px;letter-spacing:0.140px">Close= </span><span class="r" style="left:417.0px;letter-spacing:0.194px">98.27</span><span class="w" style="left:448.0px;letter-spacing:-0.334px"> </span><span class="w" style="left:451.0px;letter-spacing:-0.268px">• </span><span class="w" style="left:458.0px;letter-spacing:0.203px">Change= </span><span class="r" style="left:512.0px;letter-spacing:0.163px">-0.34%</span><span class="w" style="left:551.0px;letter-spacing:-0.334px"> </span><span class="w" style="left:554.0px;letter-spacing:-0.268px">• </span><span class="w" style="left:561.0px;letter-spacing:0.081px">Volume: </span><span class="r" style="left:609.0px;letter-spacing:0.174px">47,073,864.00</span><span class="w" style="left:688.0px;letter-spacing:-0.334px"> </span><span class="w" style="left:691.0px;letter-spacing:-0.268px">• </span><span class="w" style="left:698.0px;letter-spacing:-0.051px">n_Vol: </span><span class="r" style="left:735.0px;letter-spacing:0.161px">0.92</span></div>
<div class="t" id="r1" style="left:4px;top:17px"><span class="r" style="left:0.0px;letter-spacing:0.004px">-------------------------</span></div>
<div class="t" id="r2" style="left:4px;top:32px"><span class="r" style="left:0.0px;letter-spacing:0.028px">Test_Trend:</span></div>
<div class="t" id="r3" style="left:4px;top:47px"><span class="w" style="left:0.0px;letter-spacing:-0.021px">RSI_Status:B:M_T_W_Tr| </span><span class="w" style="left:141.3px;letter-spacing:0.074px">TREND_Status:+++**| </span><span class="w" style="left:265.0px;letter-spacing:0.109px">Power:</span><span class="g" style="left:303.0px;letter-spacing:0.326px">80</span><span class="w" style="left:317.0px;letter-spacing:-0.226px">| </span><span class="w" style="left:323.0px;letter-spacing:0.176px">Strong:******</span><span class="s" style="left:392.0px;letter-spacing:-0.226px">| </span><span class="s" style="left:398.0px;letter-spacing:0.171px">Zone_Status:Sell_Zone</span></div>
<div class="t" id="r4" style="left:4px;top:62px"><span class="s" style="left:0.0px;letter-spacing:-0.226px">| </span><span class="s" style="left:6.0px;letter-spacing:0.134px">Daily_singal:Ban </span><span class="s" style="left:101.0px;letter-spacing:0.161px">Lan </span><span class="s" style="left:125.0px;letter-spacing:0.326px">1</span></div>
<div class="t" id="r5" style="left:4px;top:77px"><span class="w" style="left:0.0px;letter-spacing:-0.268px">• </span><span class="w" style="left:7.0px;letter-spacing:-0.058px">Money_Daily:</span><span class="r" style="left:79.0px;letter-spacing:0.149px">-3,349,648.00</span><span class="w" style="left:155.0px;letter-spacing:-0.268px">• </span><span class="w" style="left:162.0px;letter-spacing:-0.113px">+-:</span><span class="r" style="left:176.0px;letter-spacing:0.149px">-1,083,848.00</span></div>
<div class="t" id="r6" style="left:4px;top:92px"><span class="r" style="left:0.0px;letter-spacing:0.004px">-------------------------</span></div>
<div class="t" id="r7" style="left:4px;top:107px"><span class="w" style="left:0.0px;letter-spacing:-0.268px">• </span><span class="w" style="left:7.0px;letter-spacing:-0.333px">MT1:</span><span class="r" style="left:33.0px;letter-spacing:0.194px">98.53</span></div>
<div class="t" id="r8" style="left:4px;top:122px"><span class="w" style="left:0.0px;letter-spacing:-0.268px">• </span><span class="w" style="left:7.0px;letter-spacing:-0.004px">Value:</span><span class="g" style="left:41.0px;letter-spacing:0.194px">94.30</span></div>
<div class="t" id="r9" style="left:4px;top:137px"><span class="w" style="left:0.0px;letter-spacing:-0.189px">| </span><span class="w" style="left:6.1px;letter-spacing:0.122px">Value_Status:Đinh </span><span class="w" style="left:111.0px;letter-spacing:-0.002px">Gia </span><span class="w" style="left:133.0px;letter-spacing:0.163px">Tang </span><span class="w" style="left:164.5px;letter-spacing:0.039px">Truong. </span><span class="w" style="left:209.5px;letter-spacing:0.163px">Đâu </span><span class="w" style="left:235.5px;letter-spacing:-0.169px">tu, </span><span class="w" style="left:251.5px;letter-spacing:0.331px">nam </span><span class="w" style="left:279.5px;letter-spacing:0.163px">giu </span><span class="w" style="left:299.5px;letter-spacing:0.080px">cho </span><span class="w" style="left:322.5px;letter-spacing:0.161px">dên </span><span class="w" style="left:346.5px;letter-spacing:0.082px">khi </span><span class="w" style="left:365.5px;letter-spacing:0.197px">Đinh </span><span class="w" style="left:394.5px;letter-spacing:-0.002px">Gia </span><span class="w" style="left:416.5px;letter-spacing:-0.202px">Thay </span><span class="w" style="left:445.5px;letter-spacing:0.165px">Đôi </span><span class="w" style="left:467.5px;letter-spacing:0.053px">Trang </span><span class="w" style="left:502.5px;letter-spacing:0.163px">thai</span></div>
<div class="t" id="r10" style="left:4px;top:152px"><span class="w" style="left:0.0px;letter-spacing:-0.207px">| </span><span class="w" style="left:6.0px;letter-spacing:0.181px">Trend_Status:Ngan </span><span class="w" style="left:116.7px;letter-spacing:-0.012px">Han </span><span class="w" style="left:142.0px;letter-spacing:0.123px">Tang </span><span class="w" style="left:173.3px;letter-spacing:0.039px">Truong. </span><span class="w" style="left:218.3px;letter-spacing:0.163px">Đâu </span><span class="w" style="left:244.3px;letter-spacing:-0.169px">tu, </span><span class="w" style="left:260.3px;letter-spacing:0.331px">nam </span><span class="w" style="left:288.3px;letter-spacing:0.163px">giu </span><span class="w" style="left:308.3px;letter-spacing:0.196px">Ngan </span><span class="w" style="left:341.3px;letter-spacing:0.161px">han </span><span class="w" style="left:365.3px;letter-spacing:0.163px">Cho </span><span class="w" style="left:391.3px;letter-spacing:0.163px">Đên </span><span class="w" style="left:417.3px;letter-spacing:0.081px">Khi </span><span class="w" style="left:438.3px;letter-spacing:-0.202px">Thay </span><span class="w" style="left:467.3px;letter-spacing:0.165px">Đôi </span><span class="w" style="left:489.3px;letter-spacing:-0.337px">Xu </span><span class="w" style="left:506.3px;letter-spacing:0.328px">Huong</span></div>
<div class="t" id="r11" style="left:4px;top:167px"><span class="w" style="left:0.0px;letter-spacing:-0.268px">• </span><span class="w" style="left:7.0px;letter-spacing:-0.064px">Over_Value:</span><span class="g" style="left:73.0px;letter-spacing:0.161px">4.22</span></div>
<div class="t" id="r12" style="left:4px;top:182px"><span class="w" style="left:0.0px;letter-spacing:-0.268px">• </span><span class="w" style="left:7.0px;letter-spacing:0.052px">Short_Value:</span><span class="g" style="left:77.0px;letter-spacing:0.194px">97.87</span></div>
<div class="t" id="r13" style="left:4px;top:197px"><span class="w" style="left:0.0px;letter-spacing:-0.268px">• </span><span class="w" style="left:7.0px;letter-spacing:0.080px">N_Taget:</span><span class="r" style="left:57.0px;letter-spacing:0.194px">98.12</span></div>
<div class="t" id="r14" style="left:4px;top:212px"><span class="w" style="left:0.0px;letter-spacing:-0.268px">• </span><span class="w" style="left:7.0px;letter-spacing:-0.063px">Over_Taget:</span><span class="r" style="left:73.0px;letter-spacing:0.130px">-0.16</span></div>
<div class="t" id="r15" style="left:4px;top:227px"><span class="w" style="left:0.0px;letter-spacing:-0.268px">• </span><span class="w" style="left:7.0px;letter-spacing:0.052px">Short_Taget:</span><span class="r" style="left:77.0px;letter-spacing:0.194px">97.51</span></div>
<div class="t" id="r16" style="left:4px;top:242px"><span class="w" style="left:0.0px;letter-spacing:-0.268px">• </span><span class="w" style="left:7.0px;letter-spacing:0.107px">H7_Taget:</span><span class="r" style="left:64.0px;letter-spacing:0.194px">98.60</span></div>
<div class="t" id="r17" style="left:4px;top:257px"><span class="w" style="left:0.0px;letter-spacing:-0.268px">• </span><span class="w" style="left:7.0px;letter-spacing:0.024px">Taget-Value:</span><span class="r" style="left:76.0px;letter-spacing:0.130px">-4.22</span></div>
<div class="t" id="r18" style="left:4px;top:272px"><span class="w" style="left:0.0px;letter-spacing:-0.268px">• </span><span class="w" style="left:7.0px;letter-spacing:-0.664px">MTM:</span><span class="r" style="left:35.0px;letter-spacing:0.194px">94.43</span></div>
<div class="t" id="r19" style="left:4px;top:287px"><span class="w" style="left:0.0px;letter-spacing:-0.268px">• </span><span class="w" style="left:7.0px;letter-spacing:-0.466px">MTM1:</span><span class="r" style="left:42.0px;letter-spacing:0.194px">98.04</span></div>
<div class="t" id="r20" style="left:4px;top:302px"><span class="w" style="left:0.0px;letter-spacing:-0.268px">• </span><span class="w" style="left:7.0px;letter-spacing:-0.499px">MTQ:</span><span class="r" style="left:35.0px;letter-spacing:0.194px">94.71</span></div>
<div class="t" id="r21" style="left:4px;top:317px"><span class="w" style="left:0.0px;letter-spacing:-0.268px">• </span><span class="w" style="left:7.0px;letter-spacing:-0.334px">MTQ1:</span><span class="r" style="left:42.0px;letter-spacing:0.216px">101.26</span></div>
<div class="t" id="r22" style="left:4px;top:332px"><span class="w" style="left:0.0px;letter-spacing:-0.268px">• </span><span class="w" style="left:7.0px;letter-spacing:-0.666px">MTY:</span><span class="r" style="left:33.0px;letter-spacing:0.194px">95.37</span></div>
<div class="t" id="r23" style="left:4px;top:347px"><span class="w" style="left:0.0px;letter-spacing:-0.268px">• </span><span class="w" style="left:7.0px;letter-spacing:-0.468px">MTY1:</span><span class="r" style="left:40.0px;letter-spacing:0.216px">106.42</span></div>
<div class="t" id="lt" style="left:4px;top:473px"><span class="g" style="left:0.0px;letter-spacing:-0.078px">Matrix_Price </span><span class="g" style="left:69.0px;letter-spacing:-0.027px">:0.4|</span><span class="r" style="left:92.0px;letter-spacing:-0.334px">   </span><span class="r" style="left:101.0px;letter-spacing:-0.067px">Diff </span><span class="r" style="left:122.0px;letter-spacing:-0.334px">: </span><span class="r" style="left:128.0px;letter-spacing:-0.021px">-0.2| </span><span class="r" style="left:155.0px;letter-spacing:-0.183px">Matrix_Vol </span><span class="r" style="left:213.0px;letter-spacing:-0.126px">:-0.9|   </span><span class="r" style="left:249.0px;letter-spacing:-0.067px">Diff </span><span class="r" style="left:270.0px;letter-spacing:-0.334px">: </span><span class="r" style="left:276.0px;letter-spacing:0.081px">-0.1</span></div>
<div class="ax" style="top:430px">86</div>
<div class="ax" style="top:402px">87</div>
<div class="ax" style="top:373px">88</div>
<div class="ax" style="top:345px">89</div>
<div class="ax" style="top:317px">90</div>
<div class="ax" style="top:288px">91</div>
<div class="ax" style="top:260px">92</div>
<div class="ax" style="top:232px">93</div>
<div class="ax" style="top:203px">94</div>
<div class="ax" style="top:175px">95</div>
<div class="ax" style="top:147px">96</div>
<div class="ax" style="top:118px">97</div>
<div class="ax" style="top:90px">98</div>
<div class="ax" style="top:62px">99</div>
<div class="ax" style="top:33px">100</div>
<div class="ax" style="top:5px">101</div>
<div class="ax" style="top:489px">2.5</div>
<div class="ax" style="top:534px">2.0</div>
<div class="ax" style="top:580px">1.5</div>
<div class="ax" style="top:625px">1.0</div>
<div class="ax" style="top:671px">0.5</div>
<div class="ax" style="top:716px">0.0</div>
<div class="ax" style="top:762px">-0.5</div>
<div class="ax" style="top:807px">-1.0</div>
<svg width="1246" height="870" viewBox="0 0 1246 870" shape-rendering="crispEdges" style="position:absolute;left:0;top:0">
<rect x="1193" y="67" width="46" height="15" fill="#0000ff"/>
<polygon points="1186,89.5 1193,82 1246,82 1246,97 1193,97" fill="#ff0000"/>
<rect x="1193" y="195" width="53" height="15" fill="#32cd32"/>
<rect x="1193" y="649" width="53" height="15" fill="#ffff00"/>
<polygon points="1186,691.5 1193,684 1246,684 1246,699 1193,699" fill="#ff0000"/>
<rect x="1193" y="796" width="53" height="15" fill="#ffc0cb"/>
</svg>
<div class="lb" style="left:1197.7px;top:68px;color:#fff">98.529</div>
<div class="lb" style="left:1197.7px;top:83px">98.2746</div>
<div class="lb" style="left:1197.7px;top:196px">94.2989</div>
<div class="lb" style="left:1197.7px;top:650px">0.744492</div>
<div class="lb" style="left:1197.7px;top:685px">0.352384</div>
<div class="lb" style="left:1193.7px;top:797px">-0.87163</div>
<div class="m" style="left:50px;width:22px">Mar</div>
<div class="m" style="left:251px;width:20px">Apr</div>
<div class="m" style="left:417px;width:22px">May</div>
<div class="m" style="left:601px;width:21px">Jun</div>
<div id="sb"><span style="left:5.0px;letter-spacing:0.123px">Created </span><span style="left:40.5px;letter-spacing:0.099px">with </span><span style="left:59.5px;letter-spacing:0.219px">AmiBroker </span><span style="left:106.2px;letter-spacing:0.201px">- </span><span style="left:112.1px;letter-spacing:0.263px">advanced </span><span style="left:156.0px;letter-spacing:0.109px">charting </span><span style="left:191.5px;letter-spacing:0.221px">and </span><span style="left:209.9px;letter-spacing:0.208px">technical </span><span style="left:250.0px;letter-spacing:0.354px">analysis </span><span style="left:288.2px;letter-spacing:0.269px">software. </span><span style="left:329.9px;letter-spacing:0.149px">http://www.amibroker.com</span></div>
</body></html>
